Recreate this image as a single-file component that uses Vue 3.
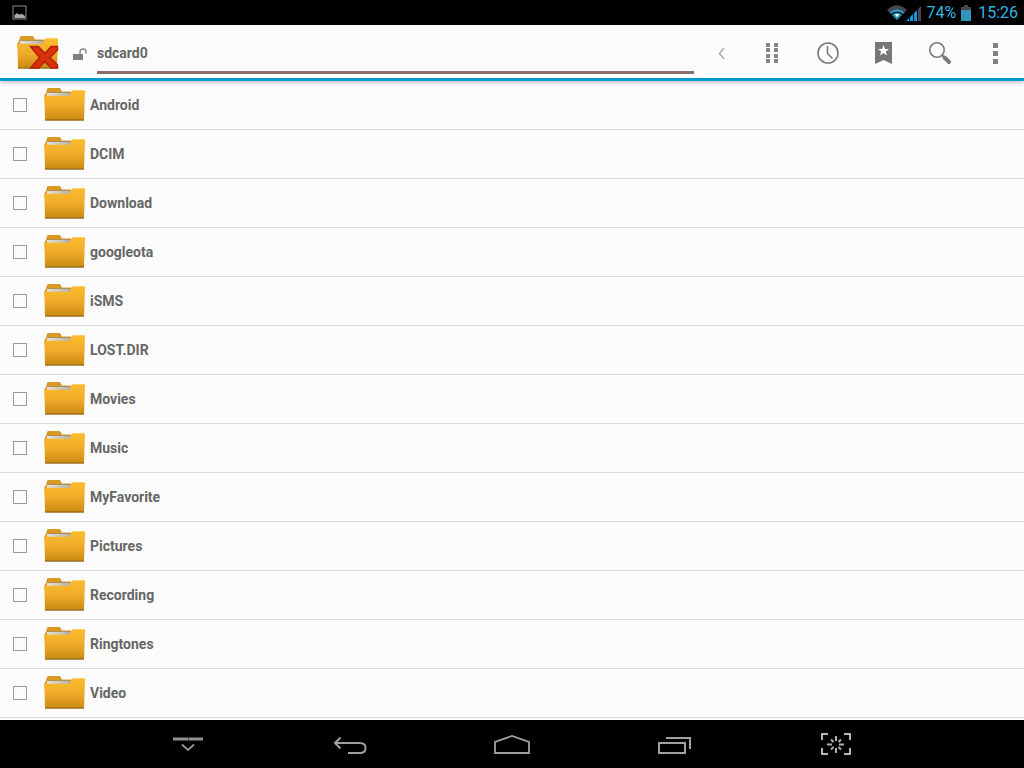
<script setup>
import { ref } from 'vue'

const path = ref('sdcard0')
const selected = ref([])

const folders = [
  'Android',
  'DCIM',
  'Download',
  'googleota',
  'iSMS',
  'LOST.DIR',
  'Movies',
  'Music',
  'MyFavorite',
  'Pictures',
  'Recording',
  'Ringtones',
  'Video'
]
</script>

<template>
  <div class="screen">
    <!-- Shared folder artwork -->
    <svg class="sprite" width="0" height="0" aria-hidden="true">
      <defs>
        <linearGradient id="folder-front" x1="0" y1="0" x2="0" y2="1">
          <stop offset="0" stop-color="#fdbd2e" />
          <stop offset="0.5" stop-color="#efab29" />
          <stop offset="1" stop-color="#c98a12" />
        </linearGradient>
        <linearGradient id="folder-paper" x1="0" y1="0" x2="1" y2="0">
          <stop offset="0" stop-color="#e6e3dc" />
          <stop offset="1" stop-color="#b5b0a6" />
        </linearGradient>
        <symbol id="folder" viewBox="0 0 42 34">
          <path d="M0.5 7 L2 5 L3 1 Q3.4 0 5 0 H15 Q16.3 0 16.7 1 L18 3.5 H27.5 V12 H0.5 Z" fill="#d99a24" />
          <path d="M3 4.8 H26.5 V9 H3 Z" fill="url(#folder-paper)" />
          <path d="M3 4.5 H27" stroke="#a98a55" stroke-width="0.8" />
          <path d="M0.3 7.8 H25.5 L28 3 Q28.4 2.3 29.2 2.3 H40.2 Q41 2.3 41 3.2 L40 32.5 H1 Z" fill="url(#folder-front)" />
          <path d="M1 32 H40" stroke="#8a6325" stroke-width="1" />
        </symbol>
      </defs>
    </svg>

    <header class="status-bar">
      <svg class="notice" viewBox="0 0 16 16">
        <rect x="1" y="1" width="13" height="13" fill="none" stroke="#8c8c8c" />
        <path d="M2.5 13 V10 L5 8 L7 9.5 L9 9 L11 9.5 L13 11 V13 Z" fill="#a8a8a8" />
      </svg>
      <div class="status-info">
        <svg class="wifi" viewBox="0 0 20 16">
          <path d="M1 5 Q11 -4.5 21 5 L19 7 Q11 1 3 7 Z" fill="#484848" />
          <path d="M3.2 7.2 Q11 0.8 18.8 7.2 L17 9 Q11 4.5 5 9 Z" fill="#2f93b8" />
          <path d="M5.8 9.8 Q11 5.5 16.2 9.8 L11 15 Z" fill="#2f93b8" />
          <path d="M8.8 9.4 Q11 8 13.2 9.4 L11 12.3 Z" fill="#e8fbff" />
        </svg>
        <svg class="signal" viewBox="0 0 16 16">
          <path d="M0 16 L3 13 V16 Z M4 12 L7 9 V16 H4 Z M8 8 L11 5 V16 H8 Z" fill="#0e9ae3" />
          <path d="M12 4 L15 1 V16 H12 Z" fill="#484848" />
        </svg>
        <span class="percent">74%</span>
        <svg class="battery" viewBox="0 0 10 16">
          <path d="M3 0 H7 V2 H10 V6 H0 V2 H3 Z" fill="#484848" />
          <path d="M0 5 H10 V16 H0 Z" fill="#3194b8" />
        </svg>
        <time>15:26</time>
      </div>
    </header>

    <nav class="action-bar">
      <svg class="app-icon" viewBox="0 0 42 34">
        <use href="#folder" width="42" height="34" />
        <path d="M13.5 10.5 H21.5 L28 17.5 L34 10.5 H40.5 V14 L33 21.5 L40.5 29 V32 H34 L27.5 25.5 L22 32 H13.5 L22.5 21.5 Z" fill="#d63306" stroke="#b9200a" stroke-width="1.5" />
      </svg>
      <svg class="lock" viewBox="0 0 14 12">
        <path d="M0 6 H10 V12 H0 Z" fill="#808080" />
        <path d="M7 6 V4 Q7 1 10 1 Q13 1 13 4 V5.5" fill="none" stroke="#8a8a8a" stroke-width="1.5" />
      </svg>
      <input v-model="path" class="path" aria-label="Path" spellcheck="false" />
      <button class="action back" aria-label="Parent folder">
        <svg viewBox="0 0 32 32">
          <path d="M18 11 L13.5 16.5 L18 22" fill="none" stroke="#aaa" stroke-width="1.5" />
        </svg>
      </button>
      <button class="action" aria-label="View">
        <svg viewBox="0 0 32 32">
          <path
            d="M10 6 h4 v4 h-4 Z M18 6 h4 v4 h-4 Z M10 11 h4 v4 h-4 Z M18 11 h4 v4 h-4 Z M10 17 h4 v4 h-4 Z M18 17 h4 v4 h-4 Z M10 22 h4 v4 h-4 Z M18 22 h4 v4 h-4 Z"
            fill="#858585"
          />
        </svg>
      </button>
      <button class="action" aria-label="History">
        <svg viewBox="0 0 32 32">
          <circle cx="16" cy="16" r="10" fill="none" stroke="#7a7a7a" stroke-width="1.6" />
          <path d="M15.5 9 V16.5 L20.5 21.5" fill="none" stroke="#7a7a7a" stroke-width="1.6" />
        </svg>
      </button>
      <button class="action" aria-label="Bookmarks">
        <svg viewBox="0 0 32 32">
          <path d="M7 5 H24 V27 L15.5 23 L7 27 Z" fill="#777" />
          <path d="M15.5 8 L17 12 H21 L17.8 14.5 L19 18.5 L15.5 16 L12 18.5 L13.2 14.5 L10 12 H14 Z" fill="#fff" />
        </svg>
      </button>
      <button class="action" aria-label="Search">
        <svg viewBox="0 0 32 32">
          <circle cx="13" cy="13" r="7.2" fill="none" stroke="#7a7a7a" stroke-width="1.6" />
          <path d="M18 18 L20 20" stroke="#7a7a7a" stroke-width="2" />
          <path d="M20.5 20.5 L25 25" stroke="#7a7a7a" stroke-width="4" stroke-linecap="round" />
        </svg>
      </button>
      <button class="action" aria-label="More options">
        <svg viewBox="0 0 32 32">
          <path d="M13 6 h5 v5 h-5 Z M13 14 h5 v5 h-5 Z M13 22 h5 v5 h-5 Z" fill="#808080" />
        </svg>
      </button>
    </nav>

    <main class="files">
      <ul class="file-list">
        <li v-for="name in folders" :key="name">
          <label class="file-row">
            <input v-model="selected" type="checkbox" class="tick" :value="name" />
            <svg class="folder"><use href="#folder" width="42" height="34" /></svg>
            <span>{{ name }}</span>
          </label>
        </li>
      </ul>
    </main>

    <footer class="nav-bar">
      <button class="nav-key" aria-label="Hide bar">
        <svg viewBox="0 0 36 28">
          <path d="M3 7 H18 M18.5 7 H33" stroke="#929292" stroke-width="3" />
          <path d="M12 12.5 L18 18 L24 12.5" fill="none" stroke="#929292" stroke-width="1.8" />
        </svg>
      </button>
      <button class="nav-key" aria-label="Back">
        <svg viewBox="0 0 36 28">
          <path d="M8.5 5.5 L3 11 L8.5 16.5 M3 11 H28 Q33.5 11 33.5 16 Q33.5 21 28 21 H16" fill="none" stroke="#a0a0a0" stroke-width="2" />
        </svg>
      </button>
      <button class="nav-key" aria-label="Home">
        <svg viewBox="0 0 36 28">
          <path d="M1 21 V10 L18 4 L35 10 V21 Z" fill="none" stroke="#a0a0a0" stroke-width="1.8" />
        </svg>
      </button>
      <button class="nav-key" aria-label="Recent apps">
        <svg viewBox="0 0 36 28">
          <path d="M3 11 H29 V21 H3 Z M10 6 H34 V17" fill="none" stroke="#a0a0a0" stroke-width="2" />
        </svg>
      </button>
      <button class="nav-key" aria-label="Screenshot">
        <svg viewBox="0 0 36 28">
          <path d="M4 8 V2 H10 M26 2 H32 V8 M32 16 V22 H26 M10 22 H4 V16" fill="none" stroke="#b8b8b8" stroke-width="2" />
          <path
            d="M18 4 V9 M18 16 V21 M9 12.5 H14 M21 12.5 H26 M13 7.5 L15.5 10 M23 7.5 L20.5 10 M13 17.5 L15.5 15 M23 17.5 L20.5 15"
            stroke="#b0b0b0"
            stroke-width="2"
          />
        </svg>
      </button>
    </footer>
  </div>
</template>

<style>
body {
  margin: 0;
  background: #fcfcfc;
}
</style>

<style scoped>
.screen {
  display: flex;
  flex-direction: column;
  min-height: 100vh;
  background: #fcfcfc;
  color: #666;
  font-family: Roboto, 'Noto Sans', sans-serif;
  font-size: 14px;
  font-weight: 700;
}

button {
  padding: 0;
  border: 0;
  background: none;
  cursor: pointer;
}

svg {
  display: block;
  flex: none;
}

.sprite {
  position: absolute;
}

/* Status bar */
.status-bar {
  display: flex;
  align-items: center;
  justify-content: space-between;
  height: 25px;
  padding: 0 6px 0 12px;
  background: #000;
  color: #33b5e5;
  font-size: 16px;
  font-weight: 400;
}

.notice {
  width: 16px;
  height: 16px;
}

.status-info {
  display: flex;
  align-items: center;
}

.wifi {
  width: 20px;
  height: 16px;
  overflow: visible;
}

.signal {
  width: 16px;
  height: 16px;
  margin-right: 4px;
}

.battery {
  width: 10px;
  height: 16px;
  margin: 0 7px 0 5px;
}

/* Action bar */
.action-bar {
  display: flex;
  align-items: center;
  height: 53px;
  padding-left: 17px;
  border-bottom: 3px solid #0099cc;
  box-shadow: 0 1px 5px rgba(0, 0, 0, 0.3);
}

.app-icon {
  width: 42px;
  height: 34px;
  margin-top: 2px;
}

.lock {
  width: 14px;
  height: 12px;
  margin: 4px 10px 0 14px;
}

.path {
  flex: 1;
  align-self: flex-start;
  min-width: 0;
  height: 49px;
  box-sizing: border-box;
  margin-right: 6px;
  padding: 10px 0 0;
  border: 0;
  border-bottom: 3px solid #866e6b;
  outline: none;
  background: none;
  color: inherit;
  font: inherit;
}

.action {
  display: flex;
  align-items: center;
  justify-content: center;
  flex: none;
  width: 56px;
  height: 48px;
  padding-top: 3px;
}

.back {
  width: 44px;
}

.action svg {
  width: 32px;
  height: 32px;
}

/* File list */
.files {
  flex: 1;
}

.file-list {
  margin: 0;
  padding: 0;
  list-style: none;
}

.file-row {
  display: flex;
  align-items: center;
  box-sizing: border-box;
  height: 49px;
  padding-left: 13px;
  border-bottom: 1px solid #dadada;
}

.tick {
  appearance: none;
  flex: none;
  width: 14px;
  height: 14px;
  margin: 0 17px 0 0;
  border: 1px solid #999;
}

.tick:checked {
  background: #33b5e5;
}

.folder {
  width: 42px;
  height: 34px;
  margin-right: 4px;
}

/* Navigation keys */
.nav-bar {
  display: flex;
  justify-content: center;
  height: 48px;
  background: #000;
}

.nav-key {
  display: flex;
  align-items: center;
  justify-content: center;
  width: 162px;
  padding-top: 4px;
}

.nav-key svg {
  width: 36px;
  height: 28px;
}
</style>
